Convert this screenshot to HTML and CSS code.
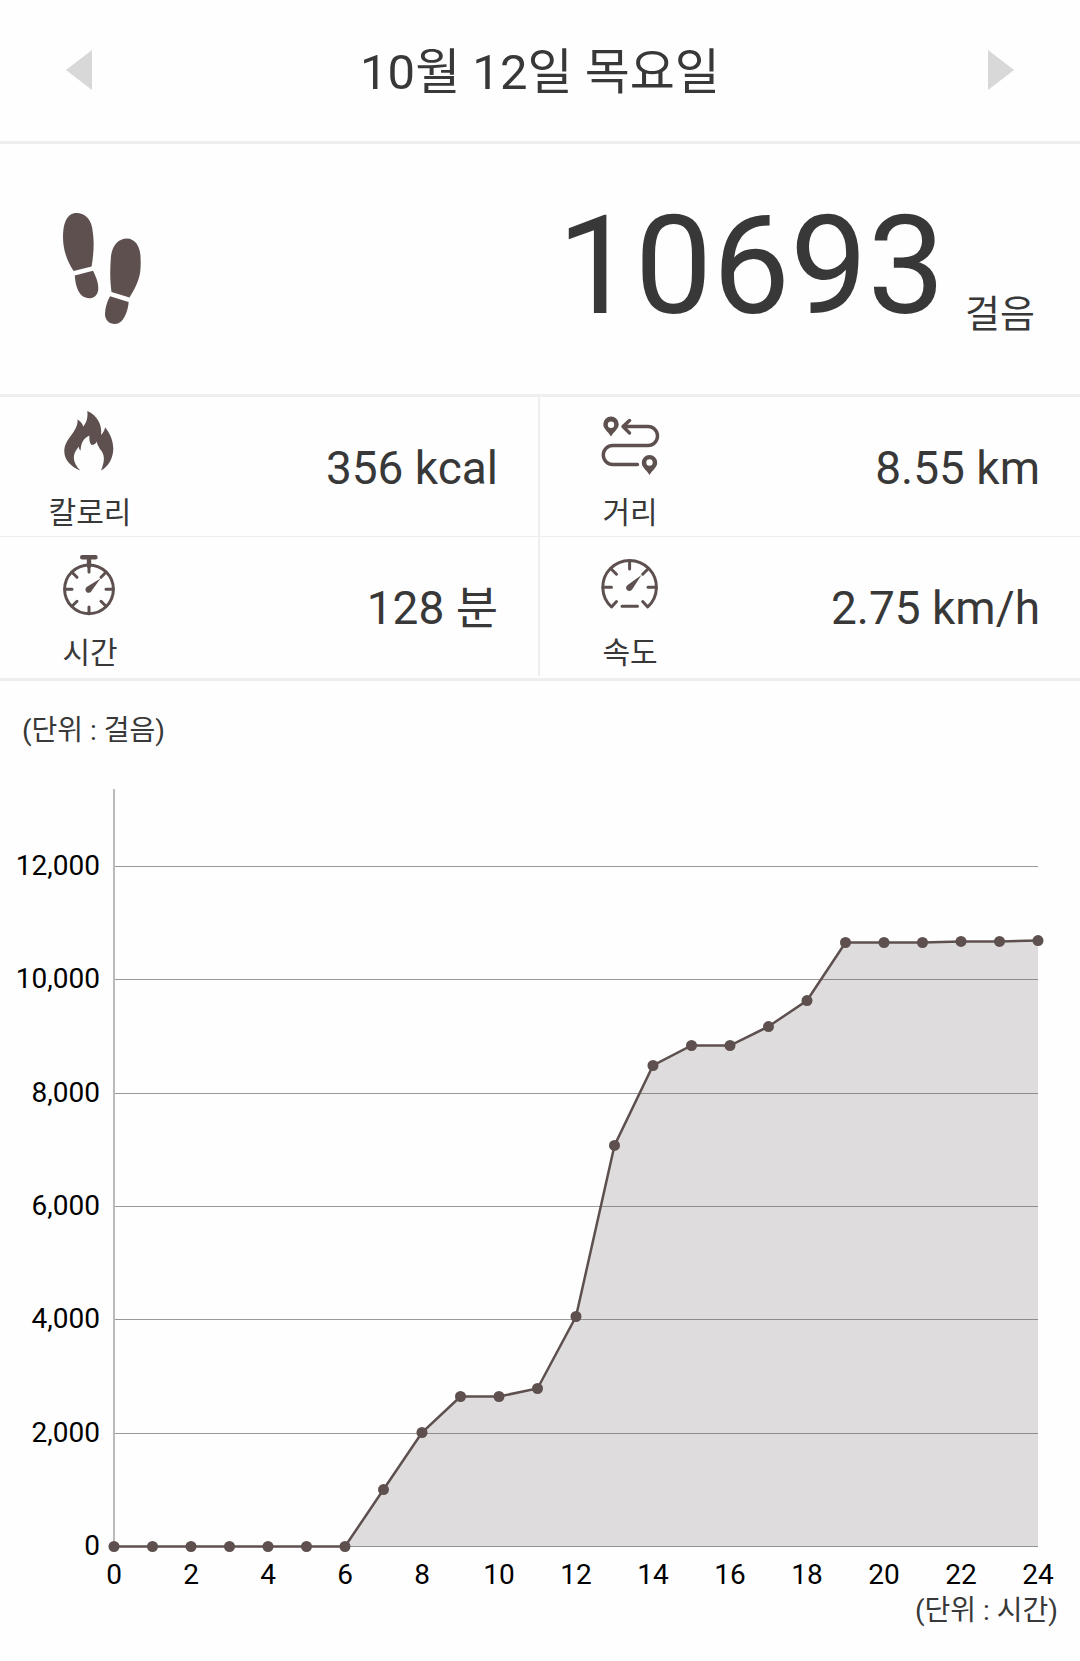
FILE: index.html
```html
<!DOCTYPE html>
<html lang="ko">
<head>
    <meta charset="UTF-8">
    <meta name="viewport" content="width=device-width, initial-scale=1.0">
    <title>만보기</title>
    <link rel="stylesheet" href="styles.css">
</head>
<body>
    <header class="date-bar">
        <button type="button" class="arrow" aria-label="이전 날짜">
            <svg width="26" height="40" viewBox="0 0 26 40"><path d="M26 0V40L0 20Z"/></svg>
        </button>
        <h1>10월 12일 목요일</h1>
        <button type="button" class="arrow" aria-label="다음 날짜">
            <svg width="26" height="40" viewBox="0 0 26 40"><path d="M0 0V40L26 20Z"/></svg>
        </button>
    </header>

    <section class="steps">
        <svg class="feet" width="78" height="112" viewBox="0 0 78 112">
            <path d="M13.6 0C21 0 27 5 29 14C31 25 31.5 36 28.6 53.5L10.6 58C4 48 0 37 0 24C0 10 4 0 13.6 0Z"/>
            <path d="M11.8 62.6L30 57.8C33 64 35.3 69 35.3 76C35 82 31 85.3 26 85.3C16 85 12.5 74 11.8 62.6Z"/>
            <path d="M64 25.6C72 25.6 77.5 34 77.5 44C78.5 61 76 69 66.5 84.5L48.5 79C46.8 66 47 55 48 43C49.5 32 56 25.6 64 25.6Z"/>
            <path d="M47 83.3L65.6 89C65 99 60 111 52 111C46 111 42 107 42 101C42 95 44 89 47 83.3Z"/>
        </svg>
        <p class="count"><strong>10693</strong><span>걸음</span></p>
    </section>

    <section class="stats">
        <div class="stat">
            <div class="stat-name">
                <svg class="icon" width="64" height="68" viewBox="0 0 64 68">
                    <path class="solid" d="M29.3 2C39 6 44.5 16 43 26C45 24 47 21 47 18.3C52 24 55.3 32 55.3 40C55 50 50 58 43 61.6C46.500 53 47 47 43.500 42C41 39 39.500 36 38.600 32.600C38 35 36 36 33.600 36C31 33 31.500 30 31.300 26.600C24 30 23 36 22.600 41.600C21 41 21 39 21 37.600C13 46 15 54 22.300 61.600C13 58 6.300 51 6.300 42.600C6.300 29 20 24 19.600 10.600C22 12 24 14 25.300 17.600C29 13 30 8 29.300 2Z"/>
                </svg>
                <span>칼로리</span>
            </div>
            <p class="value">356 kcal</p>
        </div>
        <div class="stat">
            <div class="stat-name">
                <svg class="icon" width="64" height="68" viewBox="0 0 64 68">
                    <path class="solid" fill-rule="evenodd" d="M13 27.5C10 22.5 5.3 20 5.3 15.3A7.7 7.7 0 0 1 20.7 15.3C20.7 20 16 22.5 13 27.5ZM13 12.5A3.2 3.2 0 1 0 13 18.9A3.2 3.2 0 1 0 13 12.5Z"/>
                    <path class="solid" fill-rule="evenodd" d="M51.5 66C48.5 61 43.8 58.5 43.8 53.8A7.7 7.7 0 0 1 59.2 53.8C59.2 58.5 54.5 61 51.5 66ZM51.5 50.3A3.2 3.2 0 1 0 51.5 56.7A3.2 3.2 0 1 0 51.5 50.3Z"/>
                    <path class="line" d="M25 17.5H50A9.5 9.5 0 0 1 50 36.5H14.8A9.5 9.5 0 0 0 14.8 55.5H39.5M31.5 11.5L25 17.5L31.5 24"/>
                </svg>
                <span>거리</span>
            </div>
            <p class="value">8.55 km</p>
        </div>
        <div class="stat">
            <div class="stat-name">
                <svg class="icon" width="64" height="68" viewBox="0 0 64 68">
                    <circle class="ring" cx="31" cy="40.3" r="24.4"/>
                    <path class="stem" d="M24.2 8.3H37.5M31 9V17"/>
                    <path class="tick" d="M31 16V23M31 58V64M7 40.3H14M48 40.3H55M14 23.3L19 28.3M48 23.3L43 28.3M14 57.3L19 52.3M48 57.3L43 52.3"/>
                    <path class="solid" d="M42.5 29.5L33.5 42A3.2 3.2 0 1 1 29 37.8Z"/>
                </svg>
                <span>시간</span>
            </div>
            <p class="value">128 분</p>
        </div>
        <div class="stat">
            <div class="stat-name">
                <svg class="icon" width="64" height="68" viewBox="0 0 64 68">
                    <path class="ring" d="M18.5 52.5L13.5 58A26.8 26.8 0 1 1 49.7 58L44.7 52.5M24 57.2H39.5"/>
                    <path class="tick" d="M31.6 12V20M5 38.3H13.5M50 38.3H58M13 19.7L18.5 25.2M50.2 19.7L44.7 25.2"/>
                    <path class="solid" d="M43.5 26L34.3 40.3A3.3 3.3 0 1 1 29.3 36.2Z"/>
                </svg>
                <span>속도</span>
            </div>
            <p class="value">2.75 km/h</p>
        </div>
    </section>

    <section class="chart">
        <p class="unit">(단위 : 걸음)</p>
        <svg id="stepChart" viewBox="0 0 1080 840" role="img" aria-label="시간별 걸음 수"></svg>
        <p class="unit unit-hours">(단위 : 시간)</p>
    </section>

    <script src="chart.js"></script>
</body>
</html>
```
FILE: styles.css
```css
body {
    margin: 0;
    background-color: #fefefe;
    color: #383838;
    font-family: Roboto, "Noto Sans CJK KR", sans-serif;
}

h1, p {
    margin: 0;
    font-weight: 400;
}

/* date header */
.date-bar {
    display: flex;
    justify-content: space-between;
    align-items: center;
    height: 140px;
    padding: 0 66px 1px;
    border-bottom: 3px solid #eeeeee;
}

.date-bar h1 {
    padding-top: 6px;
    font-size: 49px;
    line-height: 60px;
}

.arrow {
    padding: 0;
    border: none;
    background: none;
    cursor: pointer;
}

.arrow svg {
    display: block;
    fill: #d8d8d8;
}

/* step count */
.steps {
    display: flex;
    justify-content: space-between;
    align-items: center;
    height: 250px;
    padding: 0 45px 0 63px;
    border-bottom: 3px solid #eeeeee;
}

.feet {
    fill: #5d504f;
}

.count {
    display: flex;
    align-items: flex-end;
    gap: 20px;
    padding-bottom: 6px;
}

.count strong {
    font-size: 138px;
    font-weight: 400;
    line-height: 146px;
}

.count span {
    font-size: 38px;
    line-height: 50px;
}

/* four small stats */
.stats {
    display: grid;
    grid-template-columns: 1fr 1fr;
    padding-bottom: 2px;
    border-bottom: 3px solid #eeeeee;
}

.stat {
    display: flex;
    justify-content: space-between;
    align-items: center;
    height: 137px;
    padding: 2px 40px 0 0;
}

.stat:nth-child(odd) {
    border-right: 2px solid #eeeeee;
}

.stat:nth-child(-n+2) {
    border-bottom: 1px solid #eeeeee;
}

.stat-name {
    display: flex;
    flex-direction: column;
    align-items: center;
    gap: 18px;
    width: 180px;
    padding-top: 4px;
    font-size: 30px;
    line-height: 36px;
}

.value {
    font-size: 46px;
    line-height: 56px;
}

.icon {
    fill: none;
    stroke: #5d504f;
    stroke-linecap: round;
    stroke-linejoin: round;
}

.solid {
    fill: #5d504f;
    stroke: none;
}

.line {
    stroke-width: 3.4;
}

.ring, .tick {
    stroke-width: 3;
}

.stem {
    stroke-width: 4.4;
}

/* chart */
.chart {
    padding: 30px 0;
}

.chart svg {
    display: block;
    width: 100%;
}

.unit {
    padding: 0 22px;
    font-size: 28px;
    line-height: 40px;
}

.unit-hours {
    text-align: right;
}

.chart text {
    fill: #000000;
    font-size: 28px;
}

.y-label {
    text-anchor: end;
}

.x-label {
    text-anchor: middle;
}

.grid-line {
    stroke: #808080;
    stroke-opacity: 0.8;
    stroke-width: 1;
}

.axis {
    stroke: #bbbbbb;
    stroke-width: 2;
}

.area {
    fill: #5e5459;
    fill-opacity: 0.2;
}

.step-line {
    fill: none;
    stroke: #5d504f;
    stroke-width: 2.5;
}

.dot {
    fill: #5d504f;
}
```
FILE: chart.js
```javascript
// total steps at the end of each hour, 0 to 24
const steps = [0, 0, 0, 0, 0, 0, 0, 1005, 2012, 2647, 2647, 2788, 4059, 7077, 8488,
    8841, 8841, 9176, 9635, 10659, 10659, 10659, 10677, 10677, 10693];

const left = 114;
const right = 1038;
const axisTop = 38;
const bottom = 795.5;
const maxSteps = 12000;
const plotHeight = 680;

function xPos(hour) {
    return left + (right - left) * hour / 24;
}

function yPos(value) {
    return bottom - plotHeight * value / maxSteps;
}

const points = steps.map((value, hour) => xPos(hour) + "," + yPos(value)).join(" ");
let svg = "";

// horizontal lines and their labels
for (let value = 0; value <= maxSteps; value += 2000) {
    const y = Math.floor(yPos(value)) + 0.5;
    svg += `<line class="grid-line" x1="${left}" y1="${y}" x2="${right}" y2="${y}"/>`;
    svg += `<text class="y-label" x="100" y="${y + 8}">${value.toLocaleString("en-US")}</text>`;
}

svg += `<line class="axis" x1="${left}" y1="${axisTop}" x2="${left}" y2="${bottom}"/>`;
svg += `<polygon class="area" points="${points} ${right},${bottom} ${left},${bottom}"/>`;
svg += `<polyline class="step-line" points="${points}"/>`;

steps.forEach((value, hour) => {
    svg += `<circle class="dot" cx="${xPos(hour)}" cy="${yPos(value)}" r="5.5"/>`;
    if (hour % 2 === 0) {
        svg += `<text class="x-label" x="${xPos(hour)}" y="833">${hour}</text>`;
    }
});

document.getElementById("stepChart").innerHTML = svg;
```
